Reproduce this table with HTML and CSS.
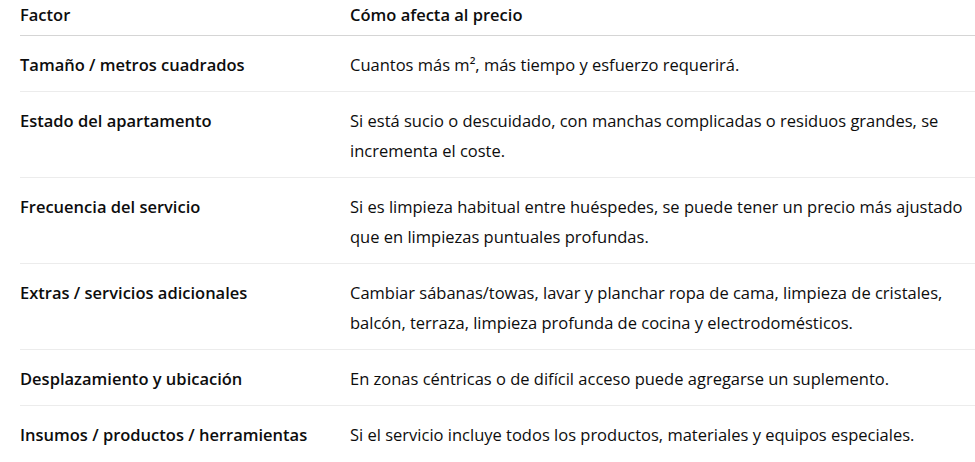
FILE: index.html
```html
<!DOCTYPE html>
<html lang="es">
<head>
<meta charset="utf-8">
<link rel="stylesheet" href="styles.css">
</head>
<body>
<table class="price-table">
  <thead>
    <tr>
      <th class="col-factor">Factor</th>
      <th>Cómo afecta al precio</th>
    </tr>
  </thead>
  <tbody>
    <tr>
      <td class="factor">Tamaño / metros cuadrados</td>
      <td>Cuantos más m², más tiempo y esfuerzo requerirá.</td>
    </tr>
    <tr>
      <td class="factor">Estado del apartamento</td>
      <td>Si está sucio o descuidado, con manchas complicadas o residuos grandes, se incrementa el coste.</td>
    </tr>
    <tr>
      <td class="factor">Frecuencia del servicio</td>
      <td>Si es limpieza habitual entre huéspedes, se puede tener un precio más ajustado que en limpiezas puntuales profundas.</td>
    </tr>
    <tr>
      <td class="factor">Extras / servicios adicionales</td>
      <td>Cambiar sábanas/towas, lavar y planchar ropa de cama, limpieza de cristales, balcón, terraza, limpieza profunda de cocina y electrodomésticos.</td>
    </tr>
    <tr>
      <td class="factor">Desplazamiento y ubicación</td>
      <td>En zonas céntricas o de difícil acceso puede agregarse un suplemento.</td>
    </tr>
    <tr>
      <td class="factor">Insumos / productos / herramientas</td>
      <td>Si el servicio incluye todos los productos, materiales y equipos especiales.</td>
    </tr>
  </tbody>
</table>
</body>
</html>
```
FILE: styles.css
```css
html, body {
  margin: 0;
  padding: 0;
  background: #ffffff;
}

body {
  font-family: "Open Sans", "Noto Sans", sans-serif;
  font-size: 16.5px;
  color: #0d0d0d;
  overflow: hidden;
}

.price-table {
  margin-left: 20px;
  width: 955px;
  border-collapse: collapse;
  table-layout: fixed;
}

.price-table th,
.price-table td {
  text-align: left;
  vertical-align: top;
  line-height: 30px;
  padding: 13.5px 0 11.5px 0;
}

.price-table th {
  font-weight: 600;
  padding-top: 0;
  padding-bottom: 5px;
  border-bottom: 1px solid #d5d5d5;
}

.price-table td {
  border-bottom: 1px solid #ececec;
}

.price-table tbody tr:last-child td {
  border-bottom: none;
}

.col-factor {
  width: 330px;
}

.factor {
  font-weight: 600;
}
```
